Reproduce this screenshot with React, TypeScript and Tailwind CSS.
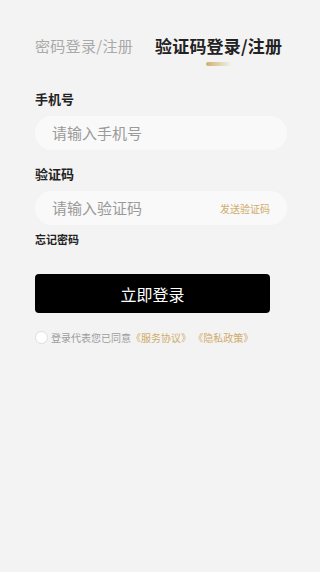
export default function App() {
  return (
    <div
      className="min-h-[572px] w-full bg-[#f3f3f3] px-[35px] pt-[34px]"
      style={{ fontFamily: '"Noto Sans CJK SC", "Noto Sans", sans-serif' }}
    >
      {/* 登录方式切换 */}
      <div className="flex items-start">
        <div className="text-[15px] leading-[24px] tracking-[0.3px] text-[#a9a9a9]">密码登录/注册</div>
        <div className="ml-[22px] flex flex-col items-center">
          <div className="text-[17px] font-bold leading-[24px] tracking-[0.2px] text-[#222]">验证码登录/注册</div>
          <div className="mt-[4px] h-[4px] w-[26px] rounded-full bg-gradient-to-r from-[#d2b06c] to-[#f3f3f3]" />
        </div>
      </div>

      {/* 手机号 */}
      <div className="mt-[24px] text-[13px] font-bold leading-[18px] text-[#222]">手机号</div>
      <div className="mt-[8px] flex h-[34px] w-[252px] items-center rounded-full bg-[#f9f9f9] pl-[17px]">
        <span className="text-[15px] text-[#9a9a9a]">请输入手机号</span>
      </div>

      {/* 验证码 */}
      <div className="mt-[15px] text-[13px] font-bold leading-[18px] text-[#222]">验证码</div>
      <div className="mt-[8px] flex h-[34px] w-[252px] items-center justify-between rounded-full bg-[#f9f9f9] pl-[17px] pr-[17px]">
        <span className="text-[15px] text-[#9a9a9a]">请输入验证码</span>
        <span className="text-[10px] text-[#d0ac6a]">发送验证码</span>
      </div>

      <div className="mt-[6px] text-[11px] font-bold leading-[16px] text-[#222]">忘记密码</div>

      {/* 登录按钮 */}
      <div className="mt-[27px] flex h-[39px] w-[235px] items-center justify-center rounded-[4px] bg-black">
        <span className="text-[16px] text-white">立即登录</span>
      </div>

      {/* 协议 */}
      <div className="mt-[17px] flex items-center">
        <div className="h-[13px] w-[13px] rounded-full border border-[#ddd] bg-white" />
        <span className="ml-[3px] text-[10px] text-[#9d9d9d]">登录代表您已同意</span>
        <span className="text-[10px] text-[#d0ac6a] whitespace-pre">《服务协议》 《隐私政策》</span>
      </div>
    </div>
  )
}
